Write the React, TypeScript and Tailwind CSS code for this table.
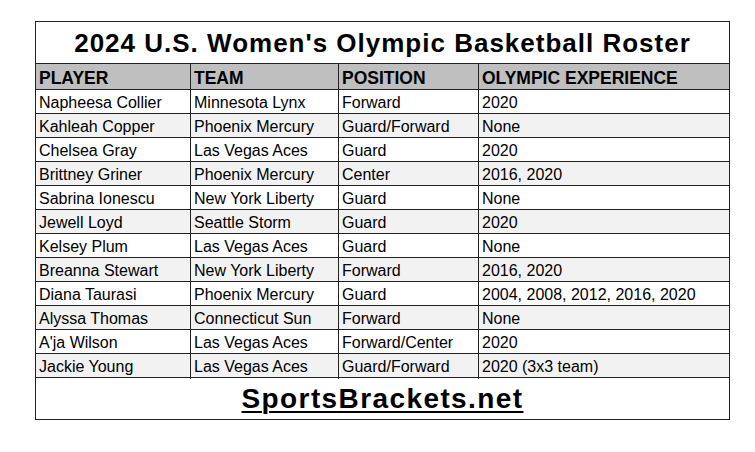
const rows = [
  ["Napheesa Collier", "Minnesota Lynx", "Forward", "2020"],
  ["Kahleah Copper", "Phoenix Mercury", "Guard/Forward", "None"],
  ["Chelsea Gray", "Las Vegas Aces", "Guard", "2020"],
  ["Brittney Griner", "Phoenix Mercury", "Center", "2016, 2020"],
  ["Sabrina Ionescu", "New York Liberty", "Guard", "None"],
  ["Jewell Loyd", "Seattle Storm", "Guard", "2020"],
  ["Kelsey Plum", "Las Vegas Aces", "Guard", "None"],
  ["Breanna Stewart", "New York Liberty", "Forward", "2016, 2020"],
  ["Diana Taurasi", "Phoenix Mercury", "Guard", "2004, 2008, 2012, 2016, 2020"],
  ["Alyssa Thomas", "Connecticut Sun", "Forward", "None"],
  ["A'ja Wilson", "Las Vegas Aces", "Forward/Center", "2020"],
  ["Jackie Young", "Las Vegas Aces", "Guard/Forward", "2020 (3x3 team)"],
];

const headers = ["PLAYER", "TEAM", "POSITION", "OLYMPIC EXPERIENCE"];

export default function App() {
  return (
    <div className="w-[755px] h-[452px] bg-white pt-[21px] pl-[35px] font-['Liberation_Sans',Arial,sans-serif] text-black">
      <div className="w-[695px] border border-[#222]">
        <div className="h-[42px] flex items-center justify-center border-b border-[#222] text-[26px] font-bold tracking-[1px] pt-[1px]">
          2024 U.S. Women's Olympic Basketball Roster
        </div>
        <div className="grid grid-cols-[155px_148px_140px_1fr] h-[26px] bg-[#bfbfbf] border-b border-[#222] text-[17.5px] font-bold">
          {headers.map((h, i) => (
            <div key={h} className={`pl-[3px] pt-[1px] flex items-center ${i < 3 ? "border-r border-[#222]" : ""}`}>
              {h}
            </div>
          ))}
        </div>
        {rows.map((r, ri) => (
          <div
            key={r[0]}
            className={`grid grid-cols-[155px_148px_140px_1fr] h-[24px] border-b border-[#222] text-[16px] ${ri % 2 ? "bg-[#f2f2f2]" : "bg-white"}`}
          >
            {r.map((c, i) => (
              <div key={i} className={`pl-[3px] pt-[1px] flex items-center ${i < 3 ? "border-r border-[#222]" : ""}`}>
                {c}
              </div>
            ))}
          </div>
        ))}
        <div className="h-[41px] flex items-center justify-center text-[28px] font-bold tracking-[1.4px] underline underline-offset-[3px] decoration-2">
          SportsBrackets.net
        </div>
      </div>
    </div>
  );
}
